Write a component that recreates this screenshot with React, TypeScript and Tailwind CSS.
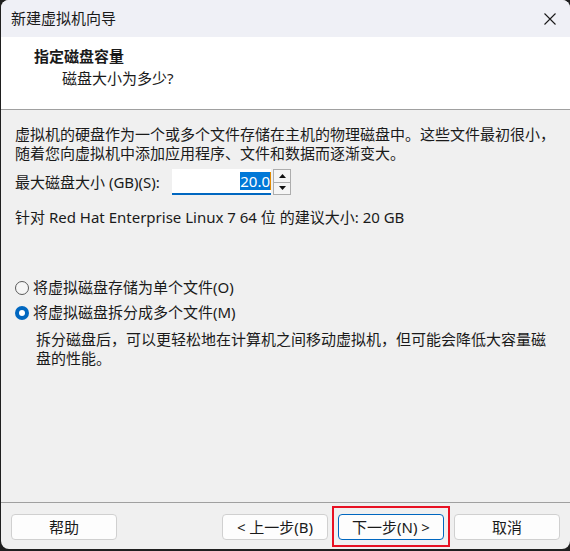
import React from "react";

const font = { fontFamily: '"Noto Sans", "Noto Sans CJK SC", sans-serif' };

function Radio({ checked }: { checked: boolean }) {
  return checked ? (
    <span className="inline-flex w-[14px] h-[14px] rounded-full bg-[#0067c0] items-center justify-center shrink-0">
      <span className="w-[6px] h-[6px] rounded-full bg-white" />
    </span>
  ) : (
    <span className="inline-block w-[14px] h-[14px] rounded-full border border-[#5a5a5a] bg-[#f5f5f5] shrink-0" />
  );
}

function Btn({ children, primary }: { children: React.ReactNode; primary?: boolean }) {
  return (
    <div
      className={
        "w-[106px] h-[26px] rounded-[4px] border flex items-center justify-center text-[15px] text-[#1a1a1a] bg-[#fdfdfd] " +
        (primary ? "border-[#0067c0]" : "border-[#d0d0d0]")
      }
    >
      {children}
    </div>
  );
}

export default function App() {
  return (
    <div className="w-[570px] h-[551px] bg-[#1f1f1f] overflow-hidden" style={font}>
      <div className="ml-[1px] w-[569px] h-[549px] rounded-[8px] overflow-hidden flex flex-col bg-[#f0f0f0] text-[#1a1a1a] leading-[19px]">
        <div className="h-[37px] bg-[#eff0f6] flex items-center justify-between pl-[10px] pr-[12px] shrink-0">
          <span className="text-[15px]">新建虚拟机向导</span>
          <svg width="12" height="12" viewBox="0 0 12 12" className="mr-[2px]">
            <path d="M0.5 0.5 L11.5 11.5 M11.5 0.5 L0.5 11.5" stroke="#1a1a1a" strokeWidth="1.1" />
          </svg>
        </div>
        <div className="h-[73px] bg-white border-b border-[#a0a0a0] shrink-0 pt-[10px]">
          <div className="pl-[33px] text-[15px] font-bold">指定磁盘容量</div>
          <div className="pl-[61px] text-[15px] mt-[3px]">磁盘大小为多少?</div>
        </div>
        <div className="flex-1 px-[14px] pt-[15px] text-[15px]">
          <p>虚拟机的硬盘作为一个或多个文件存储在主机的物理磁盘中。这些文件最初很小，</p>
          <p>随着您向虚拟机中添加应用程序、文件和数据而逐渐变大。</p>
          <div className="flex items-center mt-[6px]">
            <span className="w-[157px]">最大磁盘大小 (GB)(S):</span>
            <div className="w-[99px] h-[26px] bg-white border-b-2 border-[#0067c0] flex items-center justify-end">
              <span className="bg-[#0078d7] text-white leading-[18px]">20.0</span>
              <span className="w-[1px] h-[18px] bg-[#e08a00]" />
            </div>
            <div className="ml-[2px] w-[18px] h-[26px] flex flex-col">
              <div className="flex-1 border border-[#adadad] bg-[#f5f5f5] flex items-center justify-center">
                <svg width="7" height="4" viewBox="0 0 7 4"><path d="M3.5 0 L7 4 L0 4 Z" fill="#111" /></svg>
              </div>
              <div className="flex-1 border border-t-0 border-[#adadad] bg-[#f5f5f5] flex items-center justify-center">
                <svg width="7" height="4" viewBox="0 0 7 4"><path d="M0 0 L7 0 L3.5 4 Z" fill="#111" /></svg>
              </div>
            </div>
          </div>
          <p className="mt-[13px]">针对 Red Hat Enterprise Linux 7 64 位 的建议大小: 20 GB</p>
          <div className="mt-[51px] flex items-center gap-[4px]">
            <Radio checked={false} />
            <span>将虚拟磁盘存储为单个文件(O)</span>
          </div>
          <div className="mt-[6px] flex items-center gap-[4px]">
            <Radio checked={true} />
            <span>将虚拟磁盘拆分成多个文件(M)</span>
          </div>
          <div className="pl-[21px] mt-[8px] pr-[10px] leading-[19px]">
            <p>拆分磁盘后，可以更轻松地在计算机之间移动虚拟机，但可能会降低大容量磁</p>
            <p>盘的性能。</p>
          </div>
        </div>
        <div className="h-[47px] border-t border-[#a0a0a0] shrink-0 flex items-center px-[10px] pt-[2px]">
          <Btn>帮助</Btn>
          <div className="flex-1" />
          <Btn>&lt; 上一步(B)</Btn>
          <div className="ml-[10px] relative">
            <Btn primary>下一步(N) &gt;</Btn>
            <div className="absolute left-[-6px] top-[-8px] w-[118px] h-[41px] border-2 border-[#e81123]" />
          </div>
          <div className="ml-[10px]">
            <Btn>取消</Btn>
          </div>
        </div>
      </div>
    </div>
  );
}
